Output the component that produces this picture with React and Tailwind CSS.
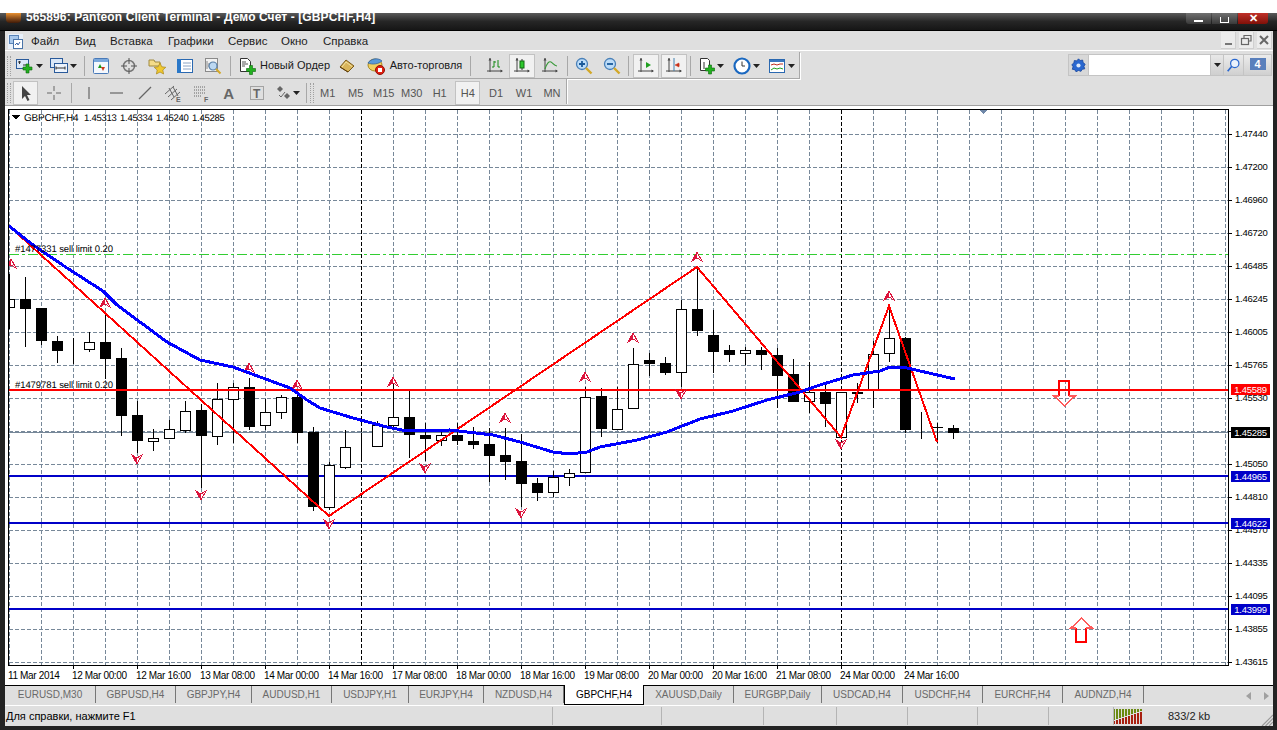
import React from "react";

const FONT = { fontFamily: '"Liberation Sans", Arial, sans-serif' };

// [high, low, top, bottom, bull]
const C = [
  [274,329,299,307,1],[277,347,299,309,0],[308,345,308,341,0],[336,363,341,351,0],[338,364,349,349,1],[332,352,342,349,1],
  [313,379,342,359,0],[348,436,358,416,0],[401,453,415,441,0],[429,451,438,441,1],[420,438,429,438,1],[401,433,411,430,1],
  [404,488,410,436,0],[383,445,399,436,1],[383,443,387,399,1],[378,430,387,427,0],[399,430,412,425,1],[395,419,397,412,1],
  [395,443,397,433,0],[427,511,432,507,0],[462,510,465,507,1],[430,469,447,467,1],[433,460,445,445,1],[421,447,425,446,1],
  [381,427,417,425,1],[390,458,417,435,0],[423,461,435,439,0],[432,446,435,440,1],[423,445,435,441,0],[427,449,441,445,0],
  [428,482,444,456,0],[428,480,455,462,0],[434,507,461,484,0],[478,501,483,493,0],[471,497,477,492,1],[469,486,473,477,1],
  [387,473,397,472,1],[388,437,396,429,0],[387,429,409,429,1],[348,408,364,408,1],[353,376,360,364,0],[357,375,363,373,0],
  [300,387,309,372,1],[267,336,309,331,0],[310,373,335,352,0],[345,362,350,355,0],[347,365,350,353,1],[347,370,350,355,0],
  [348,408,355,376,0],[359,402,374,402,0],[362,413,392,401,1],[385,427,392,404,0],[392,437,392,437,1],[383,403,392,393,1],
  [341,408,354,390,1],[306,362,338,353,1],[337,433,338,430,0],[412,439,430,430,1],[423,443,427,428,0],[425,439,428,433,0],
];
const MA = "9,226 33,245 67,268 103,291 117,305 167,342 200,360 233,367 290,388 307,400 320,408 353,418 387,427 407,431 450,430 493,435 520,442 553,452 570,454 587,452 600,447 637,440 667,432 700,419 733,411 767,400 800,392 820,385 853,375 880,371 890,367 907,368 955,379";
const ZIG = "9,226 329,516 697,267 841,437 889,306 937,442";
const UPS = [[11,264],[105,303],[249,368],[297,385],[393,382],[505,418],[585,377],[633,338],[697,257],[889,296]];
const DOWNS = [[137,459],[201,495],[329,524],[425,468],[521,513],[681,394],[841,444]];
const PRICES = ["1.47440","1.47200","1.46960","1.46720","1.46485","1.46245","1.46005","1.45765","1.45530","1.45290","1.45050","1.44810","1.44570","1.44335","1.44095","1.43855","1.43615"];
const TIMES = ["12 Mar 00:00","12 Mar 16:00","13 Mar 08:00","14 Mar 00:00","14 Mar 16:00","17 Mar 08:00","18 Mar 00:00","18 Mar 16:00","19 Mar 08:00","20 Mar 00:00","20 Mar 16:00","21 Mar 08:00","24 Mar 00:00","24 Mar 16:00"];
const TAGS = [["1.45589","top-[275px]","bg-[#ff0000]"],["1.45285","top-[318px]","bg-black"],["1.44965","top-[362px]","bg-[#0000c8]"],["1.44622","top-[409px]","bg-[#0000c8]"],["1.43999","top-[495px]","bg-[#0000c8]"]];
const TABS_L = [["EURUSD,M30",91],["GBPUSD,H4",80],["GBPJPY,H4",76],["AUDUSD,H1",80],["USDJPY,H1",77],["EURJPY,H4",75],["NZDUSD,H4",80]];
const TABS_R = [["XAUUSD,Daily",90],["EURGBP,Daily",88],["USDCAD,H4",81],["USDCHF,H4",80],["EURCHF,H4",80],["AUDNZD,H4",81]];
const MENU = [["Файл",44],["Вид",35],["Вставка",58],["Графики",60],["Сервис",53],["Окно",42],["Справка",50]];
const STATUS = [["Для справки, нажмите F1",548],["",109],["",102],["",73],["",71],["",70],["",71],["",65]];

function Arrow({ x, y, up }) {
  const s = up ? 1 : -1;
  return (
    <g transform={`translate(${x} ${y}) scale(1 ${s})`}>
      <path d="M0 -5 L5 4 L0 1 L-5 4 Z" fill="#fff" stroke="#dc143c" strokeWidth="1" />
      <path d="M0 -4 L-4 3 L0 1 Z" fill="#dc143c" />
    </g>
  );
}

function Plot() {
  const vs = Array.from({ length: 39 }, (_, k) => 9 + 32 * k);
  const hs = Array.from({ length: 17 }, (_, k) => 134 + 33 * k);
  return (
    <svg width="1221" height="557" viewBox="8 109 1221 557" className="block shrink-0 border-0" shapeRendering="crispEdges" style={FONT}>
      <rect x="8" y="109" width="1221" height="557" fill="#fff" />
      {vs.map((x) => (
        <line key={x} x1={x + 0.5} x2={x + 0.5} y1="110" y2="665" stroke={x === 361 || x === 841 ? "#000" : "#778899"} strokeDasharray="4 2" />
      ))}
      {hs.map((y) => (
        <line key={y} x1="9" x2="1228" y1={y + 0.5} y2={y + 0.5} stroke="#778899" strokeDasharray="4 2" />
      ))}
      <line x1="9" x2="1228" y1="432.5" y2="432.5" stroke="#778899" />
      <line x1="9" x2="1228" y1="254.5" y2="254.5" stroke="#32cd32" strokeDasharray="10 3 3 3" />
      {[476, 523, 609].map((y) => (
        <line key={y} x1="9" x2="1228" y1={y} y2={y} stroke="#0000c8" strokeWidth="2" />
      ))}
      {C.map(([h, l, t, b, bull], k) => {
        const c = 9 + 16 * k;
        const left = Math.max(c - 5, 9);
        return (
          <g key={k}>
            <line x1={c + 0.5} x2={c + 0.5} y1={h} y2={l} stroke="#000" />
            {bull ? (
              <rect x={left + 0.5} y={t + 0.5} width={c + 5 - left} height={Math.max(b - t, 0)} fill="#fff" stroke="#000" />
            ) : (
              <rect x={left} y={t} width={c + 6 - left} height={Math.max(b - t, 1)} fill="#000" />
            )}
          </g>
        );
      })}
      <line x1="9" x2="1228" y1="390" y2="390" stroke="#ff0000" strokeWidth="2" />
      {UPS.map(([x, y]) => <Arrow key={x} x={x} y={y} up />)}
      {DOWNS.map(([x, y]) => <Arrow key={x} x={x} y={y} />)}
      <polyline points={ZIG} fill="none" stroke="#ff0000" strokeWidth="2" />
      <polyline points={MA} fill="none" stroke="#0000ff" strokeWidth="3" />
      <path d="M1059 396 V381 H1069 V396" fill="none" stroke="#ff0000" strokeWidth="2" />
      <path d="M1059 396 H1054 L1064.500 406 L1075 396 H1069" fill="none" stroke="#ff5a5a" strokeWidth="1.500" />
      <path d="M1076 628 V642 H1086 V628" fill="none" stroke="#ff0000" strokeWidth="2" />
      <path d="M1076 628 H1071 L1081.500 618 L1092 628 H1086" fill="none" stroke="#ff5a5a" strokeWidth="1.500" />
      <path d="M978 109 H988 L983 114 Z" fill="#7088a8" />
      <path d="M12 115 H20 L16 120 Z" fill="#000" />
      <g fill="#000" textRendering="geometricPrecision">
        <text x="24" y="121" fontSize="10" letterSpacing="-0.2">GBPCHF,H4</text>
        <g fontSize="9.500" letterSpacing="-0.25">
          <text x="84" y="121">1.45313</text>
          <text x="120" y="121">1.45334</text>
          <text x="156" y="121">1.45240</text>
          <text x="192" y="121">1.45285</text>
        </g>
        <g fontSize="9.500" letterSpacing="-0.08">
          <text x="15" y="252">#1477331 sell limit 0.20</text>
          <text x="15" y="388">#1479781 sell limit 0.20</text>
        </g>
      </g>
      <rect x="8.500" y="109.500" width="1220" height="556" fill="none" stroke="#000" />
    </svg>
  );
}

const Sep = ({ ml = 0, mr = 0, h = 20 }) => (
  <div className="w-px bg-[#a8a8a8] shrink-0" style={{ height: h, marginLeft: ml, marginRight: mr }} />
);
const Grip = ({ ml = 0, mr = 0 }) => (
  <div className="w-[4px] h-[20px] shrink-0 border-x border-dotted border-[#a0a0a0]" style={{ marginLeft: ml, marginRight: mr }} />
);
const Caret = () => (
  <svg width="7" height="4" viewBox="0 0 7 4" className="shrink-0"><path d="M0 0H7L3.500 4Z" fill="#222" /></svg>
);
function Btn({ w = 28, pressed, caret, children, label, gap = 4 }) {
  return (
    <div
      className={`h-[24px] shrink-0 flex items-center justify-center ${pressed ? "bg-[#f1f1f1] border border-[#c2c2c2]" : ""}`}
      style={{ width: w, gap }}
    >
      {children}
      {label && <span className="text-[11px] leading-none text-[#1a1a1a] whitespace-nowrap">{label}</span>}
      {caret && <Caret />}
    </div>
  );
}
const S = ({ children, w = 18, h = 18, vb = "0 0 18 18" }) => (
  <svg width={w} height={h} viewBox={vb} className="shrink-0 block">{children}</svg>
);

const Plus = ({ x = 9, y = 9 }) => (
  <path transform={`translate(${x} ${y})`} d="M3 0h3v3h3v3H6v3H3V6H0V3h3z" fill="#22b020" stroke="#0a6a0a" strokeWidth=".6" />
);
const NewChart = () => (
  <S><rect x=".5" y="2.500" width="12" height="9" fill="#dbe8f8" stroke="#2a5a9a" /><path d="M2 5h3M3.500 4v3M7 8h3" stroke="#333" /><Plus x={7} y={7} /></S>
);
const Profiles = () => (
  <S><rect x=".5" y="1.500" width="12" height="9" fill="#dbe8f8" stroke="#2a5a9a" /><rect x="4.500" y="6.500" width="13" height="9" fill="#eef4fc" stroke="#2a5a9a" /><path d="M6 11h9M6 9.500v3M15 9.500v3" stroke="#333" /></S>
);
const Market = () => (
  <S><rect x="1.500" y="1.500" width="15" height="15" rx="1" fill="#f4f8fd" stroke="#4a7ab8" /><rect x="2" y="2" width="14" height="3" fill="#7aa8dc" /><path d="M6 11l2-4 2 4z" fill="#1a9a1a" /><path d="M9 10h4l-2 4z" fill="#d03a1a" /></S>
);
const Cross = () => (
  <S><circle cx="9" cy="9" r="5.500" fill="none" stroke="#777" strokeWidth="1.500" /><path d="M9 1v6M9 11v6M1 9h6M11 9h6" stroke="#555" /></S>
);
const Star = () => (
  <S><path d="M1 3h5l1 2h5v4H1z" fill="#f4dc8a" stroke="#a08a40" /><path d="M12 6l1.800 3.800 4 .5-3 2.700.8 4-3.600-2-3.600 2 .8-4-3-2.700 4-.5z" fill="#f0c830" stroke="#a8861a" strokeWidth=".7" /></S>
);
const Terminal = () => (
  <S><rect x="1.500" y="2.500" width="15" height="13" fill="#fff" stroke="#2a68b0" /><rect x="1" y="2" width="4" height="14" fill="#2a78c8" /><path d="M7 6h8M7 9h8M7 12h8" stroke="#8aa4c4" /></S>
);
const Tester = () => (
  <S><rect x="1.500" y="1.500" width="12" height="13" fill="#f2f2f2" stroke="#8a8a8a" /><path d="M3 4v8M5 6v4" stroke="#888" /><circle cx="9" cy="9" r="4" fill="#bcd8f2" stroke="#5a80a8" strokeWidth="1.200" /><path d="M12 12l4.500 4.500" stroke="#d4a828" strokeWidth="2" /></S>
);
const NewOrder = () => (
  <S><path d="M2.500 1.500h7l3 3v10h-10z" fill="#fff" stroke="#333" /><path d="M4 5h4M4 7h6M4 9h3" stroke="#555" /><Plus x={8.500} y={8.500} /></S>
);
const Editor = () => (
  <S><path d="M2 10L8 3l8 6-6 6z" fill="#d8b45a" stroke="#7a5a1a" /><path d="M4 10l4-5 6 4.500" fill="none" stroke="#f4e2a0" /><path d="M2 10l8 5" stroke="#5a3a0a" /></S>
);
const Auto = () => (
  <S w={20} h={20} vb="0 0 20 20"><ellipse cx="9" cy="9" rx="7" ry="6" fill="#f2d060" stroke="#a88a20" /><path d="M2 7c2-4 10-6 14-2-3 3-10 4-14 2z" fill="#5a9ad8" stroke="#2a5a98" strokeWidth=".7" /><circle cx="14" cy="14" r="4.500" fill="#e02010" stroke="#901008" /><rect x="12" y="12" width="4" height="4" fill="#fff" /></S>
);
const Axes = ({ children }) => (
  <S><path d="M4 1v14M1 14h15" stroke="#444" fill="none" /><path d="M4 1l-1.500 2.500h3zM17 14l-2.500-1.500v3z" fill="#444" />{children}</S>
);
const BarsI = () => <Axes><path d="M8 4v6M8 10H6M8 5h2M12 3v7h2" stroke="#178a17" fill="none" /></Axes>;
const CandleI = () => <Axes><path d="M9 2v11" stroke="#333" /><rect x="7" y="4" width="4" height="7" fill="#2cc82c" stroke="#106a10" /></Axes>;
const LineI = () => <Axes><path d="M4 12c2-6 4-8 6-7 2 1 3 4 6 4" stroke="#3a9a3a" fill="none" strokeWidth="1.200" /></Axes>;
const AutoI = () => <Axes><path d="M9 5v6l5-3z" fill="#20a020" /></Axes>;
const ShiftI = () => <Axes><path d="M9 1v13" stroke="#4080b0" /><path d="M15 8h-3M14 6l-4 2 4 2z" fill="#c83018" stroke="#c83018" strokeWidth=".5" /></Axes>;
const Zoom = ({ plus }) => (
  <S><circle cx="7" cy="7" r="5.500" fill="#bcdcf8" stroke="#4a80b8" strokeWidth="1.300" /><path d={plus ? "M4 7h6M7 4v6" : "M4 7h6"} stroke="#1a5a9a" strokeWidth="1.800" /><path d="M11 11l5.500 5.500" stroke="#d2a828" strokeWidth="2.400" /></S>
);
const AddI = () => (
  <S><path d="M2.500 1.500h7l2 2v10h-9z" fill="#fff" stroke="#333" /><path d="M6 5v7" stroke="#333" /><Plus x={7.500} y={8} /></S>
);
const Clock = () => (
  <S><circle cx="9" cy="9" r="7.500" fill="#fff" stroke="#1a68c0" strokeWidth="2.200" /><path d="M9 4.500V9h3" stroke="#333" fill="none" /></S>
);
const Templ = () => (
  <S><rect x="1.500" y="2.500" width="15" height="13" fill="#fff" stroke="#2a68b0" /><rect x="2" y="3" width="14" height="2" fill="#3a78c0" /><path d="M3 8l3-1 3 1 3-1 3 0" stroke="#c03020" fill="none" /><path d="M3 13l3-2 3 1 3-1 3 1" stroke="#20a020" fill="none" /></S>
);
const G = "#666";
const Tools = {
  cursor: <S><path d="M5 2v13l3-3 2.500 5 2-1-2.500-5h4z" fill="#444" /></S>,
  cross: <S><path d="M9 2v5M9 11v5M2 9h5M11 9h5" stroke={G} /></S>,
  v: <S><path d="M9 3v12" stroke={G} strokeWidth="1.200" /></S>,
  h: <S><path d="M2 9h13" stroke={G} strokeWidth="1.200" /></S>,
  t: <S><path d="M3 15L15 3" stroke={G} strokeWidth="1.200" /></S>,
  c: <S><path d="M1 10l9-8M4 13l9-8M7 16l9-8M5 4l5 9M9 3l5 9" stroke={G} fill="none" /><text x="12" y="17.500" fontSize="7" fontWeight="700" fill={G}>E</text></S>,
  f: <S><path d="M2 3h12M2 6h12M2 9h12M2 12h8" stroke={G} strokeDasharray="1 1" /><text x="12" y="17.500" fontSize="7" fontWeight="700" fill={G}>F</text></S>,
  T: <S><rect x="2.500" y="2.500" width="13" height="13" fill="none" stroke={G} strokeDasharray="1 1" /><text x="5" y="14" fontSize="12" fontWeight="700" fill={G}>T</text></S>,
  shapes: <S w={16}  vb="0 0 16 18"><path d="M4 2l3 3-3 3-3-3z" fill={G} /><path d="M11 9l3 3-3 3-3-3z" fill={G} /><path d="M3 11l2 2 4-5" stroke={G} fill="none" /></S>,
};

function Row1() {
  return (
    <div className="h-[27px] w-[795px] shrink-0 flex items-center pt-px bg-[#dfdfdf] border-b border-r border-[#a8a8a8] shadow-[1px_1px_0_#fff]">
      <Grip ml={2} mr={2} />
      <Btn w={32} caret gap={2}><NewChart /></Btn>
      <div className="w-[3px]" />
      <Btn w={31} caret gap={2}><Profiles /></Btn>
      <Sep ml={5} mr={2} />
      <Btn><Market /></Btn><Btn><Cross /></Btn><Btn><Star /></Btn><Btn><Terminal /></Btn><Btn><Tester /></Btn>
      <Sep ml={3} mr={4} />
      <Btn w={98} label="Новый Ордер"><NewOrder /></Btn>
      <Btn><Editor /></Btn>
      <Btn w={106} label="Авто-торговля"><Auto /></Btn>
      <Sep ml={3} mr={10} />
      <Btn><BarsI /></Btn><Btn w={26} pressed><CandleI /></Btn><Btn w={30}><LineI /></Btn>
      <Sep ml={2} mr={2} />
      <Btn><Zoom plus /></Btn><Btn><Zoom /></Btn>
      <Sep ml={2} mr={4} />
      <Btn w={26} pressed><AutoI /></Btn><div className="w-[2px]" /><Btn w={26} pressed><ShiftI /></Btn>
      <Sep ml={3} mr={3} />
      <Btn w={33} caret gap={1}><AddI /></Btn>
      <div className="w-[3px]" />
      <Btn w={32} caret gap={2}><Clock /></Btn>
      <div className="w-[3px]" />
      <Btn w={32} caret gap={2}><Templ /></Btn>
    </div>
  );
}
function Row2() {
  const tfs = ["M1","M5","M15","M30","H1"];
  return (
    <div className="h-[25px] w-[562px] shrink-0 flex items-center pt-[3px] bg-[#dfdfdf] border-r border-[#a8a8a8] shadow-[1px_0_0_#fff]">
      <Grip ml={2} mr={2} />
      <Btn w={25} pressed>{Tools.cursor}</Btn>
      <div className="w-[2px]" />
      <Btn>{Tools.cross}</Btn>
      <Sep ml={3} mr={3} />
      <Btn>{Tools.v}</Btn><Btn>{Tools.h}</Btn><Btn>{Tools.t}</Btn><Btn>{Tools.c}</Btn><Btn>{Tools.f}</Btn>
      <Btn><span className="text-[15px] font-bold text-[#666] leading-none">A</span></Btn>
      <Btn>{Tools.T}</Btn>
      <Btn w={34} caret gap={1}>{Tools.shapes}</Btn>
      <Sep ml={1} mr={3} />
      <Grip />
      {tfs.map((t) => <Btn key={t}><span className="text-[11px] text-[#555] leading-none">{t}</span></Btn>)}
      <div className="w-[2px]" />
      <Btn w={25} pressed><span className="text-[11px] text-[#555] leading-none">H4</span></Btn>
      <div className="w-[2px]" />
      {["D1","W1","MN"].map((t) => <Btn key={t}><span className="text-[11px] text-[#555] leading-none">{t}</span></Btn>)}
    </div>
  );
}

export default function App() {
  return (
    <div className="w-[1277px] h-[730px] flex flex-col bg-white overflow-hidden" style={FONT}>
      <div className="h-[13px] shrink-0 bg-white" />
      {/* Window */}
      <div className="flex-1 flex flex-col min-h-0 bg-[#232323]">
        {/* Title bar */}
        <div className="h-[18px] shrink-0 flex items-start bg-gradient-to-b from-[#5a5a5a] via-[#262626] to-[#161616] border-b border-black relative">
          <div className="w-[15px] h-[10px] ml-[6px] mr-[5px] rounded-b-sm bg-gradient-to-b from-[#e89030] to-[#401a08] shrink-0" />
          <span className="text-white font-bold text-[12px] leading-[9px] tracking-[0.1px] whitespace-nowrap">565896: Panteon Client Terminal - Демо Счет - [GBPCHF,H4]</span>
          <div className="ml-auto mr-[9px] flex gap-px h-[11px] rounded-b-[3px] overflow-hidden">
            <div className="w-[25px] bg-gradient-to-b from-[#707070] to-[#3a3a3a] flex items-end justify-center pb-[2px]"><div className="w-[9px] h-[2px] bg-white" /></div>
            <div className="w-[25px] bg-gradient-to-b from-[#707070] to-[#3a3a3a] flex items-end justify-center pb-[1px]"><div className="w-[9px] h-[6px] border border-white border-t-0" /></div>
            <div className="w-[30px] bg-gradient-to-b from-[#c03028] to-[#801008] flex items-center justify-center text-white text-[11px] leading-none font-bold">✕</div>
          </div>
        </div>

        {/* Client */}
        <div className="flex-1 min-h-0 flex flex-col ml-[5px] mr-[4px] mb-[4px] bg-[#dfdfdf]">
          {/* Menu */}
          <div className="h-[20px] shrink-0 flex items-center bg-[#dfdfdf] border-b border-white relative">
            <div className="ml-[3px] mr-[8px] mt-[1px] shrink-0">
              <S w={15} h={15} vb="0 0 15 15"><rect width="15" height="15" fill="#e8f0fa" /><rect x="1.500" y="1.500" width="9" height="8" fill="#a8c8ec" stroke="#5a84b8" /><rect x="5.500" y="5.500" width="9" height="9" fill="#fff" stroke="#4a74a8" /><path d="M7 11l2-2 1 2 2-3" stroke="#3a64a8" fill="none" /></S>
            </div>
            {MENU.map(([t, w]) => (
              <span key={t} className="text-[11.500px] leading-none text-[#1c1c1c] shrink-0 mt-[2px]" style={{ width: w }}>{t}</span>
            ))}
            <div className="ml-auto mr-[1px] flex gap-[3px]">
              {[
                <path key="a" d="M4 11h7" stroke="#777" strokeWidth="2" />,
                <g key="b" fill="none" stroke="#666" strokeWidth="1.200"><rect x="2.500" y="5.500" width="7" height="6" /><path d="M5 5V2.500h7V8h-2" /></g>,
                <path key="c" d="M3 3l8 8M11 3l-8 8" stroke="#666" strokeWidth="2" />,
              ].map((p, i) => (
                <div key={i} className="w-[15px] h-[17px] bg-[#ececec] border-b border-r border-[#cfcfcf] flex items-center justify-center">
                  <svg width="14" height="14" viewBox="0 0 14 14">{p}</svg>
                </div>
              ))}
            </div>
          </div>

          {/* Toolbar rows */}
          <div className="flex shrink-0 h-[54px] relative bg-[#dfdfdf]">
            <div className="flex flex-col">
              <div className="h-[1px]" />
              <Row1 />
              <Row2 />
            </div>
            <div className="absolute right-[1px] top-[3px] h-[22px] w-[204px] flex bg-[#d8d8d8] border border-[#c4c4c4]">
              <div className="w-[20px] flex items-center justify-center border-r border-[#c4c4c4]">
                <S w={15} h={15}><path d="M9 1l2 2 3-.5.500 3 2.500 2-1.500 2.500 1 3-3 .5-1.500 2.500L9 15l-3 1.500-1.500-2.500-3-.5 1-3L1 8l2.500-2 .5-3 3 .5z" fill="#2a68d0" stroke="#1a48a0" /><circle cx="9" cy="9" r="2.500" fill="#dce8fa" /></S>
              </div>
              <div className="w-[121px] bg-white" />
              <div className="w-[14px] flex items-center justify-center border-x border-[#c4c4c4] bg-gradient-to-b from-[#e8e8e8] to-[#cfcfcf]"><Caret /></div>
              <div className="w-[20px] flex items-center justify-center bg-gradient-to-b from-[#ececec] to-[#d0d0d0] border-r border-[#c4c4c4]">
                <S w={15} h={15}><circle cx="10.500" cy="6.500" r="5" fill="#eaf2fc" stroke="#2a68d0" strokeWidth="1.500" /><path d="M7 10l-5 6" stroke="#2a68d0" strokeWidth="2" /></S>
              </div>
              <div className="flex-1 flex items-start justify-center pt-[3px] bg-gradient-to-b from-[#ececec] to-[#d0d0d0] relative">
                <div className="w-[16px] h-[12px] bg-[#5a80bc] text-white text-[11px] font-bold leading-[12px] text-center">4</div>
              </div>
            </div>
          </div>
          <div className="h-px shrink-0 bg-[#a0a0a0]" />

          {/* Chart + axes */}
          <div className="shrink-0 flex flex-col bg-white pt-[3px] pl-[3px]">
            <div className="flex shrink-0 h-[557px]">
              <Plot />
              <div className="relative flex-1 flex flex-col pt-[8px]">
                {PRICES.map((p) => (
                  <div key={p} className="h-[33px] shrink-0 flex items-center gap-[3px]">
                    <div className="w-[3px] h-px bg-black mt-px" />
                    <span className="text-[9.500px] tracking-[-0.25px] leading-none text-black">{p}</span>
                  </div>
                ))}
                {TAGS.map(([t, top, bg]) => (
                  <div key={t} className={`absolute left-[2px] w-[39px] h-[11px] flex items-center justify-center text-white text-[9.500px] tracking-[-0.25px] leading-none ${top} ${bg}`}>{t}</div>
                ))}
              </div>
            </div>
            {/* Time axis */}
            <div className="h-[19px] shrink-0 flex items-start text-[10px] tracking-[-0.35px] leading-none text-black">
              <div className="w-[64px] shrink-0 pt-[5px] whitespace-nowrap">11 Mar 2014</div>
              {TIMES.map((t) => (
                <div key={t} className="w-[64px] shrink-0 relative pt-[5px] whitespace-nowrap">
                  <div className="absolute left-[1px] top-0 w-px h-[3px] bg-black" />
                  {t}
                </div>
              ))}
            </div>
          </div>

          {/* Tabs */}
          <div className="h-[20px] shrink-0 flex bg-[#dfdfdf] relative">
            <div className="flex h-full border-t border-black">
              {TABS_L.map(([t, w]) => (
                <div key={t} className="h-[17px] flex items-center justify-center text-[10px] text-[#6a6a6a] border-r border-[#777] shrink-0 whitespace-nowrap" style={{ width: w }}>{t}</div>
              ))}
            </div>
            <div className="w-[80px] shrink-0 h-[20px] flex items-center justify-center bg-white border-x border-b border-black text-[10px] text-black ">GBPCHF,H4</div>
            <div className="flex flex-1 h-full border-t border-black">
              {TABS_R.map(([t, w]) => (
                <div key={t} className="h-[17px] flex items-center justify-center text-[10px] text-[#6a6a6a] border-r border-[#777] shrink-0 whitespace-nowrap" style={{ width: w }}>{t}</div>
              ))}
              <div className="ml-auto mr-[4px] flex items-center gap-[11px]">
                <svg width="6" height="8" viewBox="0 0 6 8"><path d="M5 0v8L0 4z" fill="#a0a0a0" /></svg>
                <svg width="6" height="8" viewBox="0 0 6 8"><path d="M1 0v8l5-4z" fill="#a0a0a0" /></svg>
              </div>
            </div>
          </div>
          <div className="h-px shrink-0 bg-white" />

          {/* Status bar */}
          <div className="h-[20px] shrink-0 flex items-stretch bg-[#dfdfdf] relative">
            {STATUS.map(([t, w], i) => (
              <div key={i} className="shrink-0 flex items-center pl-[1px] pt-px my-[1px] border-r border-[#b4b4b4] text-[11px] leading-none text-black whitespace-nowrap" style={{ width: w }}>{t}</div>
            ))}
            <div className="w-[32px] shrink-0 flex items-center">
              <svg width="28" height="15" viewBox="0 0 28 15" shapeRendering="crispEdges">
                {Array.from({ length: 10 }, (_, i) => (
                  <g key={i}>
                    <rect x={i * 3 - 1} y="0" width="2" height={Math.max(11 - i, 2)} fill="#6a8a10" />
                    <rect x={i * 3 - 1} y={Math.max(11 - i, 2) + 1} width="2" height={14 - Math.max(11 - i, 2)} fill="#a82010" />
                  </g>
                ))}
              </svg>
            </div>
            <span className="self-center ml-[22px] text-[11px] leading-none text-[#222]">833/2 kb</span>
            <svg width="12" height="12" viewBox="0 0 12 12" className="absolute right-0 bottom-0">
              <path d="M12 1L1 12M12 4.500L4.500 12M12 8L8 12" stroke="#999" strokeWidth="1.200" />
            </svg>
          </div>
        </div>
      </div>
    </div>
  );
}
